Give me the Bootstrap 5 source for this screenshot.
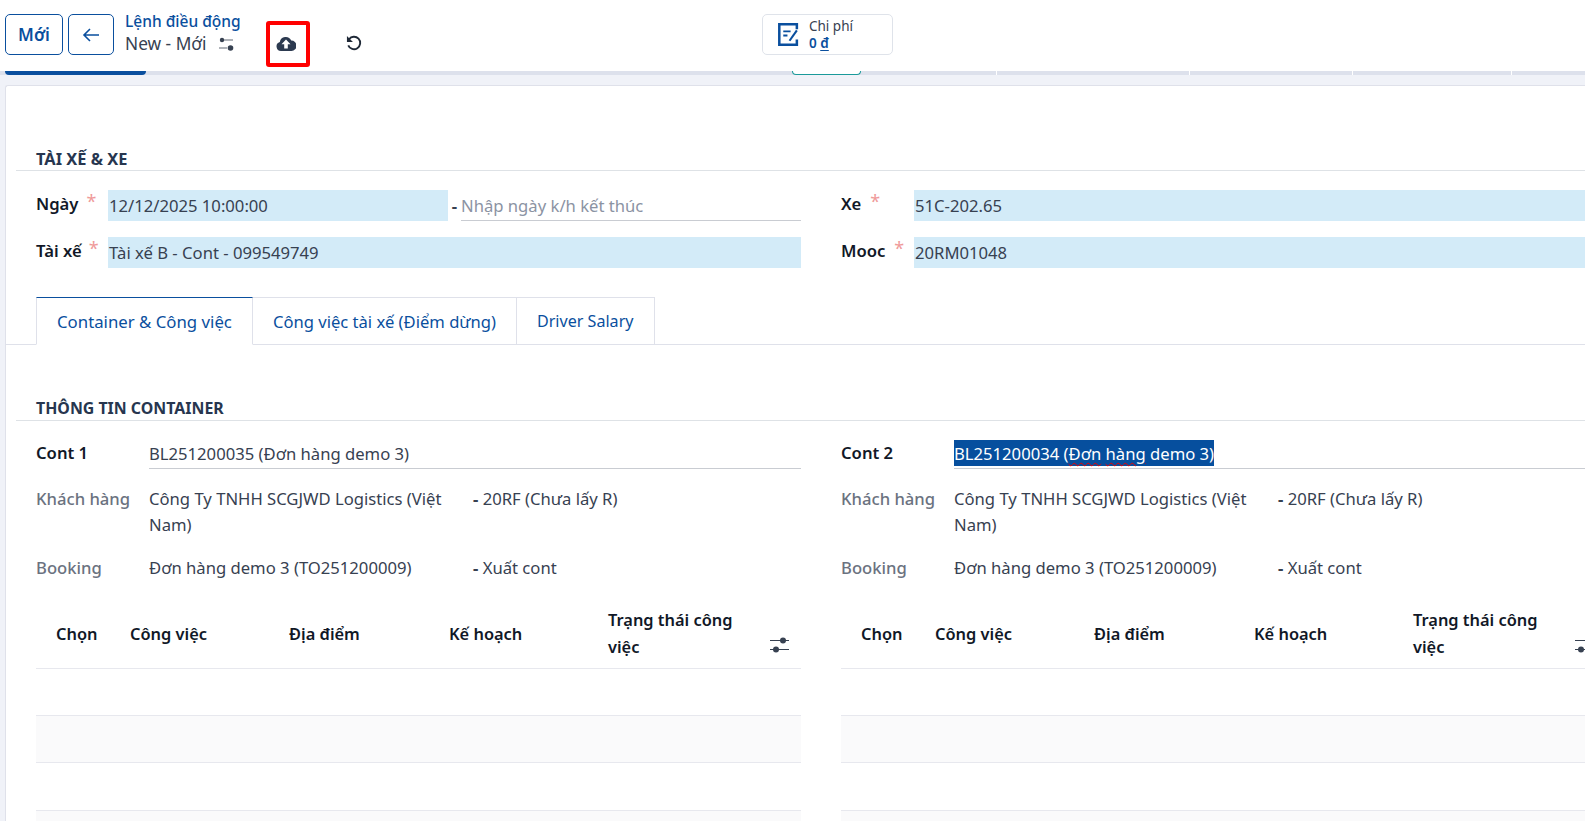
<!doctype html>
<html lang="vi">
<head>
<meta charset="utf-8">
<title>Lệnh điều động</title>
<link href="https://cdn.jsdelivr.net/npm/bootstrap@5.3.0/dist/css/bootstrap.min.css" rel="stylesheet">
<style>
html,body{height:100%;overflow:hidden;}
body{background:#f0f2f8;font-family:"Noto Sans","Open Sans",sans-serif;font-size:16.65px;color:#374151;}
.topbar{height:71px;background:#fff;padding-left:5px;position:relative;}
.tb-btn{height:41px;margin-top:14px;border:1px solid #0a4f9e;border-radius:5px;color:#0a4f9e;background:#fff;font-weight:600;font-size:17px;padding:0;display:flex;align-items:center;justify-content:center;}
.tb-new{width:58px;}
.tb-back{width:46px;margin-left:5px;}
.crumb{margin-left:11px;margin-top:10px;width:141px;}
.crumb-a{font-size:15.5px;font-weight:500;color:#0a4f9e;line-height:23px;}
.crumb-b{font-size:17.3px;line-height:22px;color:#374151;display:flex;align-items:center;gap:13px;}
.save-box{width:44px;height:46px;margin-top:21px;border:4px solid #f00;border-radius:3px;display:flex;align-items:center;justify-content:center;padding:0 4px 1px 0;}
.undo-box{margin-left:36px;margin-top:29px;height:20px;}
.stat-box{margin-left:400px;margin-top:14px;width:131px;height:41px;border:1px solid #dfe3ea;border-radius:5px;display:flex;align-items:center;padding-left:15px;gap:10px;}
.stat-l{font-size:13.5px;line-height:17px;color:#374151;}
.stat-v{font-size:13.5px;line-height:17px;font-weight:600;color:#0a4f9e;}
.stat-v u{text-underline-offset:2px;}
.strip{height:14px;position:relative;}
.strip-bar{height:4px;background:#dde1ec;display:flex;}
.strip-a{margin-left:5px;width:141px;background:#0a4f9e;border-radius:0 0 4px 4px;}
.strip-b{margin-left:646px;width:69px;background:#fff;border:1px solid #1a9a9a;border-top:0;border-radius:0 0 4px 4px;}
.tick{width:1px;background:#fff;}
.sheet{margin-left:5px;width:1660px;height:900px;background:#fff;border:1px solid #dfe1ea;border-right:0;border-radius:3px 0 0 0;padding-top:58px;}
.sec-h{margin-left:10px;padding-left:20px;height:27px;border-bottom:1px solid #dee2e6;font-size:15.9px;font-weight:700;color:#27364f;line-height:29px;}
.sec-first{font-size:16.4px;line-height:30px;}
.two{display:grid;grid-template-columns:765px 765px;column-gap:40px;margin-left:30px;}
.f-row{display:flex;align-items:flex-start;}
.lab{font-weight:600;color:#111827;white-space:nowrap;}
.req{color:#ef9a9a;font-weight:400;margin-left:8px;font-size:18px;line-height:0;position:relative;top:-2px;}
.lab-main{width:72px;line-height:28px;height:31px;}
.lab-wide{width:73px;}
.blue{background:#d3ebf8;height:31px;line-height:31px;padding-left:1px;color:#374151;}
.ph{color:#8b93a3;border-bottom:1px solid #c9ccd2;height:31px;line-height:31px;flex:1;}
.dash{width:13px;text-align:center;font-weight:700;line-height:31px;}
.tabs-wrap{margin-top:29px;height:48px;border-bottom:1px solid #dfe1ea;padding-left:30px;display:flex;}
.tab-i{height:48px;line-height:47px;padding:0 20px;color:#0a4f9e;border:1px solid #dfe1ea;border-left:0;background:#fff;font-size:16.6px;}
.tab-i:first-child{font-size:16.8px;}
.tab-i:last-child{font-size:16.1px;}
.tab-i.on{border-left:1px solid #dfe1ea;border-top:1px solid #0a4f9e;border-bottom-color:#fff;}
.lab-c{width:113px;line-height:28px;flex:none;}
.lab-g{color:#6b7280;font-weight:500;line-height:26px;}
.cval{flex:1;border-bottom:1px solid #c9ccd2;height:34px;line-height:27px;padding-top:5px;}
.sel{background:#064f9e;color:#fff;display:inline-block;height:26px;line-height:27px;}
.wavy{text-decoration:underline wavy #e00;text-decoration-thickness:1px;text-underline-offset:2px;}
.info-a{width:324px;line-height:26px;flex:none;padding-right:20px;}
.info-b{line-height:26px;}
.info-b b{font-weight:700;}
.tbl{table-layout:fixed;width:765px;margin:0;--bs-table-bg:transparent;color:#111827;}
.tbl th{height:68px;font-weight:600;color:#111827;vertical-align:middle;padding:0 12px 1px;line-height:27px;border-bottom:1px solid #e7e8ee;font-size:16.4px;}
.tbl td{height:47px;padding:0;border-bottom:1px solid #e7e8ee;}
.tbl tbody tr:nth-child(3) td{height:48px;}
.tbl tbody tr:nth-child(even) td{background:#fafafb;}
.tbl th.tc-a{padding-left:20px;}
.tbl th.tc-i{padding:18px 0 0 10px;text-align:left;vertical-align:middle;}
</style>
</head>
<body>
<div class="topbar d-flex">
  <button class="tb-btn tb-new" type="button">Mới</button>
  <button class="tb-btn tb-back" type="button" aria-label="Quay lại">
    <svg width="18" height="16" viewBox="0 0 18 16" fill="none" stroke="#0a4f9e" stroke-width="1.6"><path d="M17 8H2M8 2 2 8l6 6"/></svg>
  </button>
  <div class="crumb">
    <div class="crumb-a">Lệnh điều động</div>
    <div class="crumb-b">New - Mới
      <svg width="15" height="14" viewBox="0 0 15 14" fill="#374151"><rect x="2" y="2.5" width="12" height="1" opacity=".8"/><circle cx="3" cy="3" r="2.2"/><rect x="0" y="10.5" width="8" height="1" opacity=".8"/><circle cx="11.5" cy="11" r="2.8"/></svg>
    </div>
  </div>
  <div class="save-box">
    <svg width="20" height="15" viewBox="0 0 20 15"><path fill="#2c3a50" d="M5 15a4.6 4.6 0 0 1-1.2-9A6 6 0 0 1 15.2 4.6 5.2 5.2 0 0 1 15.5 15z"/><path fill="#fff" d="M10 3.6 14.5 8.2H11.8V12.6H8.2V8.2H5.5z"/></svg>
  </div>
  <div class="undo-box">
    <svg width="16" height="16" viewBox="0 0 17 17" fill="none" stroke="#1f2937" stroke-width="2"><path d="M3.2 4.5A6.6 6.6 0 1 1 2.4 11"/><path fill="#1f2937" stroke="none" d="M1 1v6.4h6.4z"/></svg>
  </div>
  <div class="stat-box">
    <svg width="21" height="23" viewBox="0 0 20 22" fill="none" stroke="#0a4f9e" stroke-width="2.4"><path d="M18 6V1.2H1.2v19.6H18v-5"/><path stroke-width="1.8" d="M5 8h7M5 12h4"/><path stroke-width="2" d="M11 17 18 7"/></svg>
    <div><div class="stat-l">Chi phí</div><div class="stat-v">0 <u>đ</u></div></div>
  </div>
</div>
<div class="strip">
  <div class="strip-bar">
    <div class="strip-a"></div>
    <div class="strip-b"></div>
    <div class="tick ms-auto" style="margin-right:192px"></div>
    <div class="tick" style="margin-right:162px"></div>
    <div class="tick" style="margin-right:158px"></div>
    <div class="tick" style="margin-right:73px"></div>
  </div>
</div>
<div class="sheet">
  <div class="sec-h sec-first">TÀI XẾ &amp; XE</div>
  <div class="two" style="margin-top:19px">
    <div>
      <div class="f-row mb-3">
        <div class="lab lab-main">Ngày<span class="req">*</span></div>
        <div class="blue" style="width:340px">12/12/2025 10:00:00</div>
        <div class="dash">-</div>
        <div class="ph">Nhập ngày k/h kết thúc</div>
      </div>
      <div class="f-row">
        <div class="lab lab-main">Tài xế<span class="req" style="margin-left:7px">*</span></div>
        <div class="blue flex-grow-1">Tài xế B - Cont - 099549749</div>
      </div>
    </div>
    <div>
      <div class="f-row mb-3">
        <div class="lab lab-main lab-wide">Xe<span class="req" style="margin-left:9px">*</span></div>
        <div class="blue flex-grow-1">51C-202.65</div>
      </div>
      <div class="f-row">
        <div class="lab lab-main lab-wide">Mooc<span class="req" style="margin-left:9px">*</span></div>
        <div class="blue flex-grow-1">20RM01048</div>
      </div>
    </div>
  </div>
  <div class="tabs-wrap">
    <div class="tab-i on">Container &amp; Công việc</div>
    <div class="tab-i">Công việc tài xế (Điểm dừng)</div>
    <div class="tab-i">Driver Salary</div>
  </div>
  <div class="sec-h" style="margin-top:49px">THÔNG TIN CONTAINER</div>
  <div class="two" style="margin-top:14px">
    <div>
      <div class="f-row">
        <div class="lab lab-c pt-1">Cont 1</div>
        <div class="cval">BL251200035 (Đơn hàng demo 3)</div>
      </div>
      <div class="f-row" style="margin-top:17px">
        <div class="lab lab-c lab-g">Khách hàng</div>
        <div class="info-a">Công Ty TNHH SCGJWD Logistics (Việt Nam)</div>
        <div class="info-b"><b>-</b> 20RF (Chưa lấy R)</div>
      </div>
      <div class="f-row" style="margin-top:17px">
        <div class="lab lab-c lab-g">Booking</div>
        <div class="info-a">Đơn hàng demo 3 (TO251200009)</div>
        <div class="info-b"><b>-</b> Xuất cont</div>
      </div>
    </div>
    <div>
      <div class="f-row">
        <div class="lab lab-c pt-1">Cont 2</div>
        <div class="cval"><span class="sel">BL251200034 (<span class="wavy">Đơn</span> <span class="wavy">hàng</span> demo 3)</span></div>
      </div>
      <div class="f-row" style="margin-top:17px">
        <div class="lab lab-c lab-g">Khách hàng</div>
        <div class="info-a">Công Ty TNHH SCGJWD Logistics (Việt Nam)</div>
        <div class="info-b"><b>-</b> 20RF (Chưa lấy R)</div>
      </div>
      <div class="f-row" style="margin-top:17px">
        <div class="lab lab-c lab-g">Booking</div>
        <div class="info-a">Đơn hàng demo 3 (TO251200009)</div>
        <div class="info-b"><b>-</b> Xuất cont</div>
      </div>
    </div>
  </div>
  <div class="two" style="margin-top:19px">
    <table class="table tbl">
      <colgroup><col style="width:82px"><col style="width:159px"><col style="width:160px"><col style="width:159px"><col style="width:164px"><col style="width:41px"></colgroup>
      <thead><tr><th class="tc-a">Chọn</th><th>Công việc</th><th>Địa điểm</th><th>Kế hoạch</th><th>Trạng thái công việc</th><th class="tc-i"><svg width="20" height="16" viewBox="0 0 20 16" fill="#374151"><rect y="3" width="19" height="1"/><circle cx="13" cy="3.5" r="3"/><rect y="12" width="19" height="1"/><circle cx="6" cy="12.5" r="3"/></svg></th></tr></thead>
      <tbody><tr><td colspan="6"></td></tr><tr><td colspan="6"></td></tr><tr><td colspan="6"></td></tr><tr><td colspan="6"></td></tr></tbody>
    </table>
    <table class="table tbl">
      <colgroup><col style="width:82px"><col style="width:159px"><col style="width:160px"><col style="width:159px"><col style="width:164px"><col style="width:41px"></colgroup>
      <thead><tr><th class="tc-a">Chọn</th><th>Công việc</th><th>Địa điểm</th><th>Kế hoạch</th><th>Trạng thái công việc</th><th class="tc-i"><svg width="20" height="16" viewBox="0 0 20 16" fill="#374151"><rect y="3" width="19" height="1"/><circle cx="13" cy="3.5" r="3"/><rect y="12" width="19" height="1"/><circle cx="6" cy="12.5" r="3"/></svg></th></tr></thead>
      <tbody><tr><td colspan="6"></td></tr><tr><td colspan="6"></td></tr><tr><td colspan="6"></td></tr><tr><td colspan="6"></td></tr></tbody>
    </table>
  </div>
</div>
<script src="https://cdn.jsdelivr.net/npm/bootstrap@5.3.0/dist/js/bootstrap.bundle.min.js"></script>
</body>
</html>
